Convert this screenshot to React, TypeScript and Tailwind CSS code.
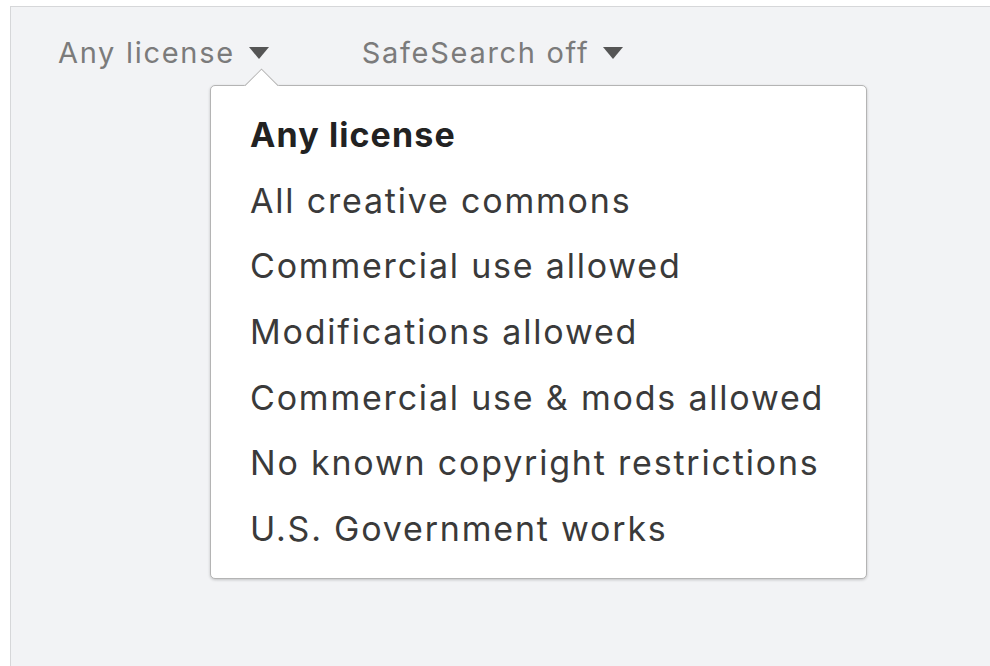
import { useState } from 'react'

const licenses = [
  'Any license',
  'All creative commons',
  'Commercial use allowed',
  'Modifications allowed',
  'Commercial use & mods allowed',
  'No known copyright restrictions',
  'U.S. Government works',
]

const Caret = () => (
  <svg width="20" height="12" viewBox="0 0 20 12" className="shrink-0">
    <polygon points="0,0 20,0 10,12" fill="#555" />
  </svg>
)

function FilterButton({ label }: { label: string }) {
  return (
    <button className="flex items-center gap-[14px] text-[29px] tracking-[1.7px] text-[#7b7b7b] leading-none">
      <span>{label}</span>
      <Caret />
    </button>
  )
}

export default function App() {
  const [selected] = useState(0)

  return (
    <div className="w-[990px] h-[666px] bg-white pt-[6px] pl-[10px] overflow-hidden font-['Inter',sans-serif]">
      <div className="relative h-full border-l border-t border-[#d6d7d9] bg-[#f2f3f5]">
        <div className="flex items-center gap-[93px] pl-[47px] pt-[31px]">
          <FilterButton label="Any license" />
          <FilterButton label="SafeSearch off" />
        </div>

        {/* license menu */}
        <div className="absolute left-[199px] top-[78px] w-[657px] h-[494px] rounded-[5px] border border-[#b4b4b4] bg-white shadow-[0_1px_3px_rgba(0,0,0,0.2)]">
          <div className="absolute left-[32px] -top-[19px] w-[38px] h-[19px] overflow-hidden">
            <div className="absolute left-[5px] top-[7px] w-[27px] h-[27px] rotate-45 border border-[#b4b4b4] bg-white" />
          </div>
          <ul className="pt-[16px] pl-[39px]">
            {licenses.map((l, i) => (
              <li
                key={l}
                className={`h-[65.7px] leading-[65.7px] text-[34px] ${i === selected ? 'font-bold tracking-[1.1px] text-[#222]' : 'tracking-[1.8px] text-[#3a3a3a]'}`}
              >
                {l}
              </li>
            ))}
          </ul>
        </div>
      </div>
    </div>
  )
}
